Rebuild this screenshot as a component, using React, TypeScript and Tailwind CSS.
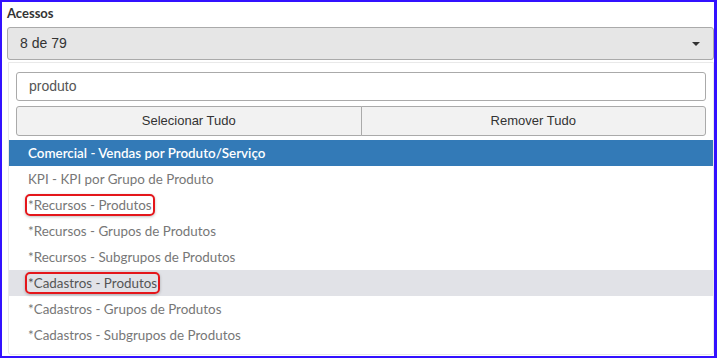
const items = [
  { label: 'Comercial - Vendas por Produto/Serviço', active: true },
  { label: 'KPI - KPI por Grupo de Produto' },
  { label: '*Recursos - Produtos', marked: true },
  { label: '*Recursos - Grupos de Produtos' },
  { label: '*Recursos - Subgrupos de Produtos' },
  { label: '*Cadastros - Produtos', marked: true, hover: true },
  { label: '*Cadastros - Grupos de Produtos' },
  { label: '*Cadastros - Subgrupos de Produtos' },
];

export default function App() {
  return (
    <div className="h-[358px] w-[717px] overflow-hidden border-l-2 border-t-2 border-b-2 border-r-[3px] border-[#3311ff] bg-white">
      <div className="pl-[5px] pt-[3px]">
        {/* Label */}
        <div className="h-[22px] text-[13px] font-bold leading-[16px] text-[#333] [font-family:Lato,sans-serif]">
          Acessos
        </div>

        {/* Select */}
        <div className="flex h-[33px] items-center justify-between rounded-[3px] border border-[#aaa] bg-[#e6e6e6] pl-[12px] pr-[13px] text-[14px] text-[#333] [font-family:'Liberation_Sans',Arial,sans-serif]">
          <span>8 de 79</span>
          <svg width="8" height="4" viewBox="0 0 8 4">
            <path d="M0 0h8L4 4z" fill="#333" />
          </svg>
        </div>

        {/* Dropdown panel */}
        <div className="ml-px mt-[2px] h-[293px] rounded-b-[3px] border border-[#e9e9e9] bg-white pt-[9px]">
          <div className="px-[7px]">
            <div className="flex h-[29px] items-center rounded-[3px] border border-[#aaa] px-[12px] text-[14px] text-[#555] [font-family:'Liberation_Sans',Arial,sans-serif]">
              produto
            </div>
            <div className="mt-[5px] flex h-[30px] text-[13px] text-[#333] [font-family:'Liberation_Sans',Arial,sans-serif]">
              <div className="flex flex-1 items-center justify-center rounded-l-[3px] border border-[#aaa] bg-[#f2f2f2]">
                Selecionar Tudo
              </div>
              <div className="-ml-px flex flex-1 items-center justify-center rounded-r-[3px] border border-[#aaa] bg-[#f2f2f2]">
                Remover Tudo
              </div>
            </div>
          </div>

          <ul className="mt-[4px] text-[13.4px] [font-family:Lato,sans-serif]">
            {items.map((item) => (
              <li
                key={item.label}
                className={
                  item.active
                    ? 'flex h-[26px] items-center bg-[#337ab7] pl-[19px] font-semibold text-white'
                    : item.hover
                      ? 'flex h-[26px] items-center bg-[#e1e2e7] pl-[19px] text-[#555]'
                      : 'flex h-[26px] items-center pl-[19px] text-[#777]'
                }
              >
                {item.marked ? (
                  <span className="-ml-[3px] rounded-[5px] border-2 border-[#e4161b] px-px leading-[18px] shadow-[0_1px_3px_rgba(0,0,0,0.25)]">
                    {item.label}
                  </span>
                ) : (
                  item.label
                )}
              </li>
            ))}
          </ul>
        </div>
      </div>
    </div>
  );
}
